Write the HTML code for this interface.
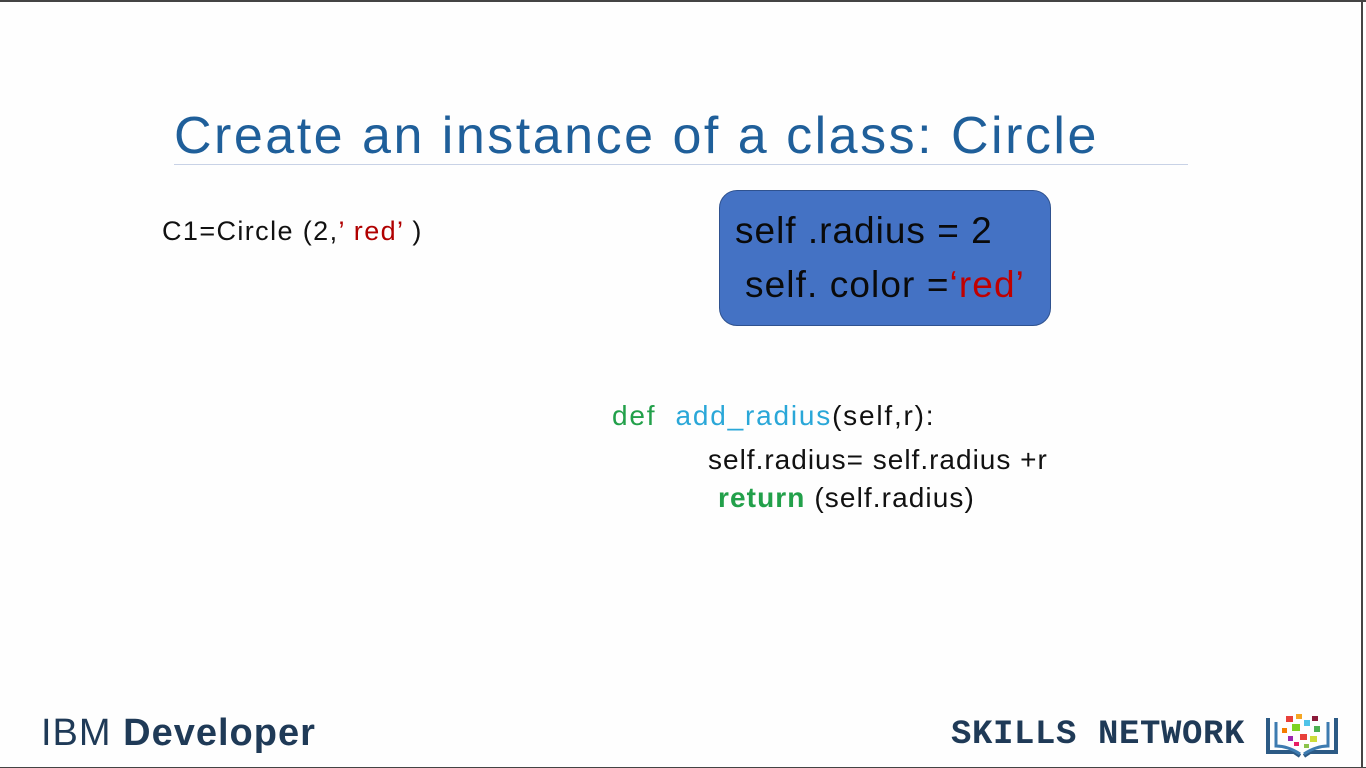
<!DOCTYPE html>
<html><head><meta charset="utf-8"><style>
html,body{margin:0;padding:0}
body{width:1366px;height:768px;position:relative;overflow:hidden;background:#fefefe;font-family:"Liberation Sans",sans-serif}
.t{position:absolute;white-space:nowrap}
</style></head><body>
<div style="position:absolute;left:0;top:0;width:1366px;height:2px;background:#444"></div>
<div style="position:absolute;right:3px;top:0;width:2px;height:768px;background:#444"></div>
<div style="position:absolute;left:0;bottom:0;width:1366px;height:1px;background:#444"></div>
<div class="t" style="left:174px;top:106px;font-size:52px;color:#1f5f9a;letter-spacing:2.5px">Create an instance of a class: Circle</div>
<div style="position:absolute;left:174px;top:164px;width:1014px;height:1px;background:#c8d2e6"></div>
<div class="t" style="left:162px;top:216px;font-size:27px;color:#111;letter-spacing:1.4px">C1=Circle (2,<span style="color:#b00000">’ red’</span> )</div>
<div style="position:absolute;left:719px;top:190px;width:330px;height:134px;background:#4472c4;border:1.5px solid #2f528f;border-radius:18px"></div>
<div class="t" style="left:735px;top:210px;font-size:37px;color:#0a0a0a;letter-spacing:1px">self .radius = 2</div>
<div class="t" style="left:745px;top:264px;font-size:37px;color:#0a0a0a;letter-spacing:1.1px">self. color =<span style="color:#c00000">‘red’</span></div>
<div class="t" style="left:612px;top:400px;font-size:28px;color:#111;letter-spacing:1.8px"><span style="color:#22a04a">def</span>&nbsp; <span style="color:#2aa7d8">add_radius</span>(self,r):</div>
<div class="t" style="left:708px;top:444px;font-size:28px;color:#111;letter-spacing:1px">self.radius= self.radius +r</div>
<div class="t" style="left:718px;top:482px;font-size:28px;color:#111;letter-spacing:1.1px"><b style="color:#22a04a">return</b> (self.radius)</div>
<div class="t" style="left:41px;top:712px;font-size:38px;color:#1f3a57;letter-spacing:1px">IBM <b>Developer</b></div>
<div class="t" style="left:951px;top:716px;font-size:34px;color:#1f3a57;font-family:'Liberation Mono',monospace;font-weight:bold;letter-spacing:0.6px">SKILLS NETWORK</div>
<svg style="position:absolute;left:1264px;top:710px" width="76" height="48" viewBox="0 0 76 48">
<path d="M4 8 V42 H30 L36 46" fill="none" stroke="#2c5a85" stroke-width="4"/>
<path d="M72 8 V42 H46 L40 46" fill="none" stroke="#2c5a85" stroke-width="4"/>
<path d="M12 12 V36 Q24 36 36 44" fill="none" stroke="#3d7bb0" stroke-width="3"/>
<path d="M64 12 V36 Q52 36 40 44" fill="none" stroke="#3d7bb0" stroke-width="3"/>
<rect x="22" y="6" width="7" height="6" fill="#e8403a"/><rect x="32" y="4" width="6" height="5" fill="#f5a623"/><rect x="40" y="10" width="6" height="6" fill="#4fc3e8"/><rect x="48" y="6" width="6" height="5" fill="#8b1a3a"/>
<rect x="28" y="14" width="8" height="7" fill="#7ed321"/><rect x="18" y="18" width="5" height="5" fill="#f57c00"/><rect x="50" y="16" width="6" height="6" fill="#4caf50"/><rect x="36" y="24" width="7" height="6" fill="#e8403a"/>
<rect x="24" y="26" width="5" height="5" fill="#9c27b0"/><rect x="46" y="26" width="7" height="6" fill="#cddc39"/><rect x="30" y="32" width="5" height="4" fill="#e91e63"/><rect x="40" y="34" width="5" height="4" fill="#8bc34a"/>
</svg>
</body></html>
